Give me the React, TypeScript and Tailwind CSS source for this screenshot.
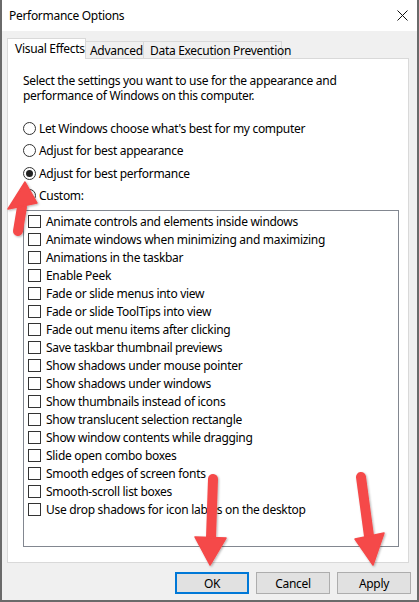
import React from 'react';

const effects = [
  'Animate controls and elements inside windows',
  'Animate windows when minimizing and maximizing',
  'Animations in the taskbar',
  'Enable Peek',
  'Fade or slide menus into view',
  'Fade or slide ToolTips into view',
  'Fade out menu items after clicking',
  'Save taskbar thumbnail previews',
  'Show shadows under mouse pointer',
  'Show shadows under windows',
  'Show thumbnails instead of icons',
  'Show translucent selection rectangle',
  'Show window contents while dragging',
  'Slide open combo boxes',
  'Smooth edges of screen fonts',
  'Smooth-scroll list boxes',
  'Use drop shadows for icon labels on the desktop',
];

const radios = [
  { label: "Let Windows choose what's best for my computer", checked: false },
  { label: 'Adjust for best appearance', checked: false },
  { label: 'Adjust for best performance', checked: true },
  { label: 'Custom:', checked: false },
];

function Radio({ checked }: { checked: boolean }) {
  return (
    <span className="w-[13px] h-[13px] rounded-full border border-[#333] bg-white flex items-center justify-center shrink-0">
      {checked && <span className="w-[7px] h-[7px] rounded-full bg-[#222]" />}
    </span>
  );
}

function Arrow({ tail, base, left, right, tip }: { tail: number[]; base: number[]; left: number[]; right: number[]; tip: number[] }) {
  return (
    <g filter="url(#shadow)">
      <line x1={tail[0]} y1={tail[1]} x2={base[0]} y2={base[1]} stroke="#f54848" strokeWidth="10" strokeLinecap="round" />
      <polygon points={`${left[0]},${left[1]} ${right[0]},${right[1]} ${tip[0]},${tip[1]}`} fill="#f54848" strokeLinejoin="round" stroke="#f54848" strokeWidth="1.5" />
    </g>
  );
}

export default function App() {
  return (
    <div
      className="relative w-[419px] h-[602px] flex flex-col border-l-2 border-r-2 border-b-2 border-[#6a6a6a] bg-[#f0f0f0] text-[12px] text-black leading-[15px] tracking-[-0.3px] whitespace-nowrap"
      style={{ fontFamily: '"Noto Sans", "Liberation Sans", sans-serif' }}
    >
      <div className="h-[31px] bg-white flex items-center justify-between pl-[7px] pr-[9px] shrink-0">
        <span>Performance Options</span>
        <svg width="11" height="11" viewBox="0 0 11 11">
          <path d="M0.5 0.5 L10.5 10.5 M10.5 0.5 L0.5 10.5" stroke="#111" strokeWidth="1" />
        </svg>
      </div>

      <div className="flex-1 flex flex-col pt-[7px] pl-[5px] pr-[8px] pb-[6px]">
        <div className="flex items-end h-[20px]">
          <div className="relative z-10 -mb-px h-[21px] w-[79px] bg-white border border-b-0 border-[#d9d9d9] pl-[7px] pt-[2px]">
            Visual Effects
          </div>
          <div className="h-[17px] w-[58px] border border-l-0 border-b-0 border-[#d9d9d9] pl-[4px] pt-[1px]">Advanced</div>
          <div className="h-[17px] w-[138px] border border-l-0 border-b-0 border-[#d9d9d9] pl-[6px] pt-[1px]">
            Data Execution Prevention
          </div>
        </div>

        <div className="h-[505px] bg-white border border-[#d9d9d9] pt-[14px] pl-[15px] pr-[9px] pb-[15px] flex flex-col">
          <p>
            Select the settings you want to use for the appearance and
            <br />
            performance of Windows on this computer.
          </p>

          <div className="mt-[14px] flex flex-col">
            {radios.map((r) => (
              <div key={r.label} className="h-[22.5px] flex items-center gap-[3px]">
                <Radio checked={r.checked} />
                <span>{r.label}</span>
              </div>
            ))}
          </div>

          <div className="mt-[3px] flex-1 border border-[#828790] pt-px pl-[4px] flex flex-col">
            {effects.map((e) => (
              <div key={e} className="h-[18px] flex items-center gap-[5px]">
                <span className="w-[13px] h-[13px] border border-[#333] bg-white shrink-0" />
                <span>{e}</span>
              </div>
            ))}
          </div>
        </div>

        <div className="mt-[9px] flex justify-end gap-[7px] -mr-[2px]">
          <button className="w-[74px] h-[22px] bg-[#e1e1e1] border-2 border-[#0078d7] flex items-center justify-center">OK</button>
          <button className="w-[74px] h-[22px] bg-[#e1e1e1] border border-[#adadad] flex items-center justify-center">Cancel</button>
          <button className="w-[74px] h-[22px] bg-[#e1e1e1] border border-[#adadad] flex items-center justify-center">Apply</button>
        </div>
      </div>

      <svg className="absolute top-0 left-[-2px] pointer-events-none" width="419" height="602" viewBox="0 0 419 602">
        <defs>
          <filter id="shadow" x="-50%" y="-50%" width="200%" height="200%">
            <feDropShadow dx="1" dy="1" stdDeviation="1.2" floodColor="#000" floodOpacity="0.3" />
          </filter>
        </defs>
        <Arrow tail={[18, 231]} base={[22, 207]} left={[8, 209]} right={[37, 203]} tip={[25, 182]} />
        <Arrow tail={[213, 479]} base={[211, 538]} left={[195, 537]} right={[226, 538]} tip={[210, 565]} />
        <Arrow tail={[361, 477]} base={[369, 536]} left={[355, 539]} right={[384, 533]} tip={[373, 565]} />
      </svg>
    </div>
  );
}
